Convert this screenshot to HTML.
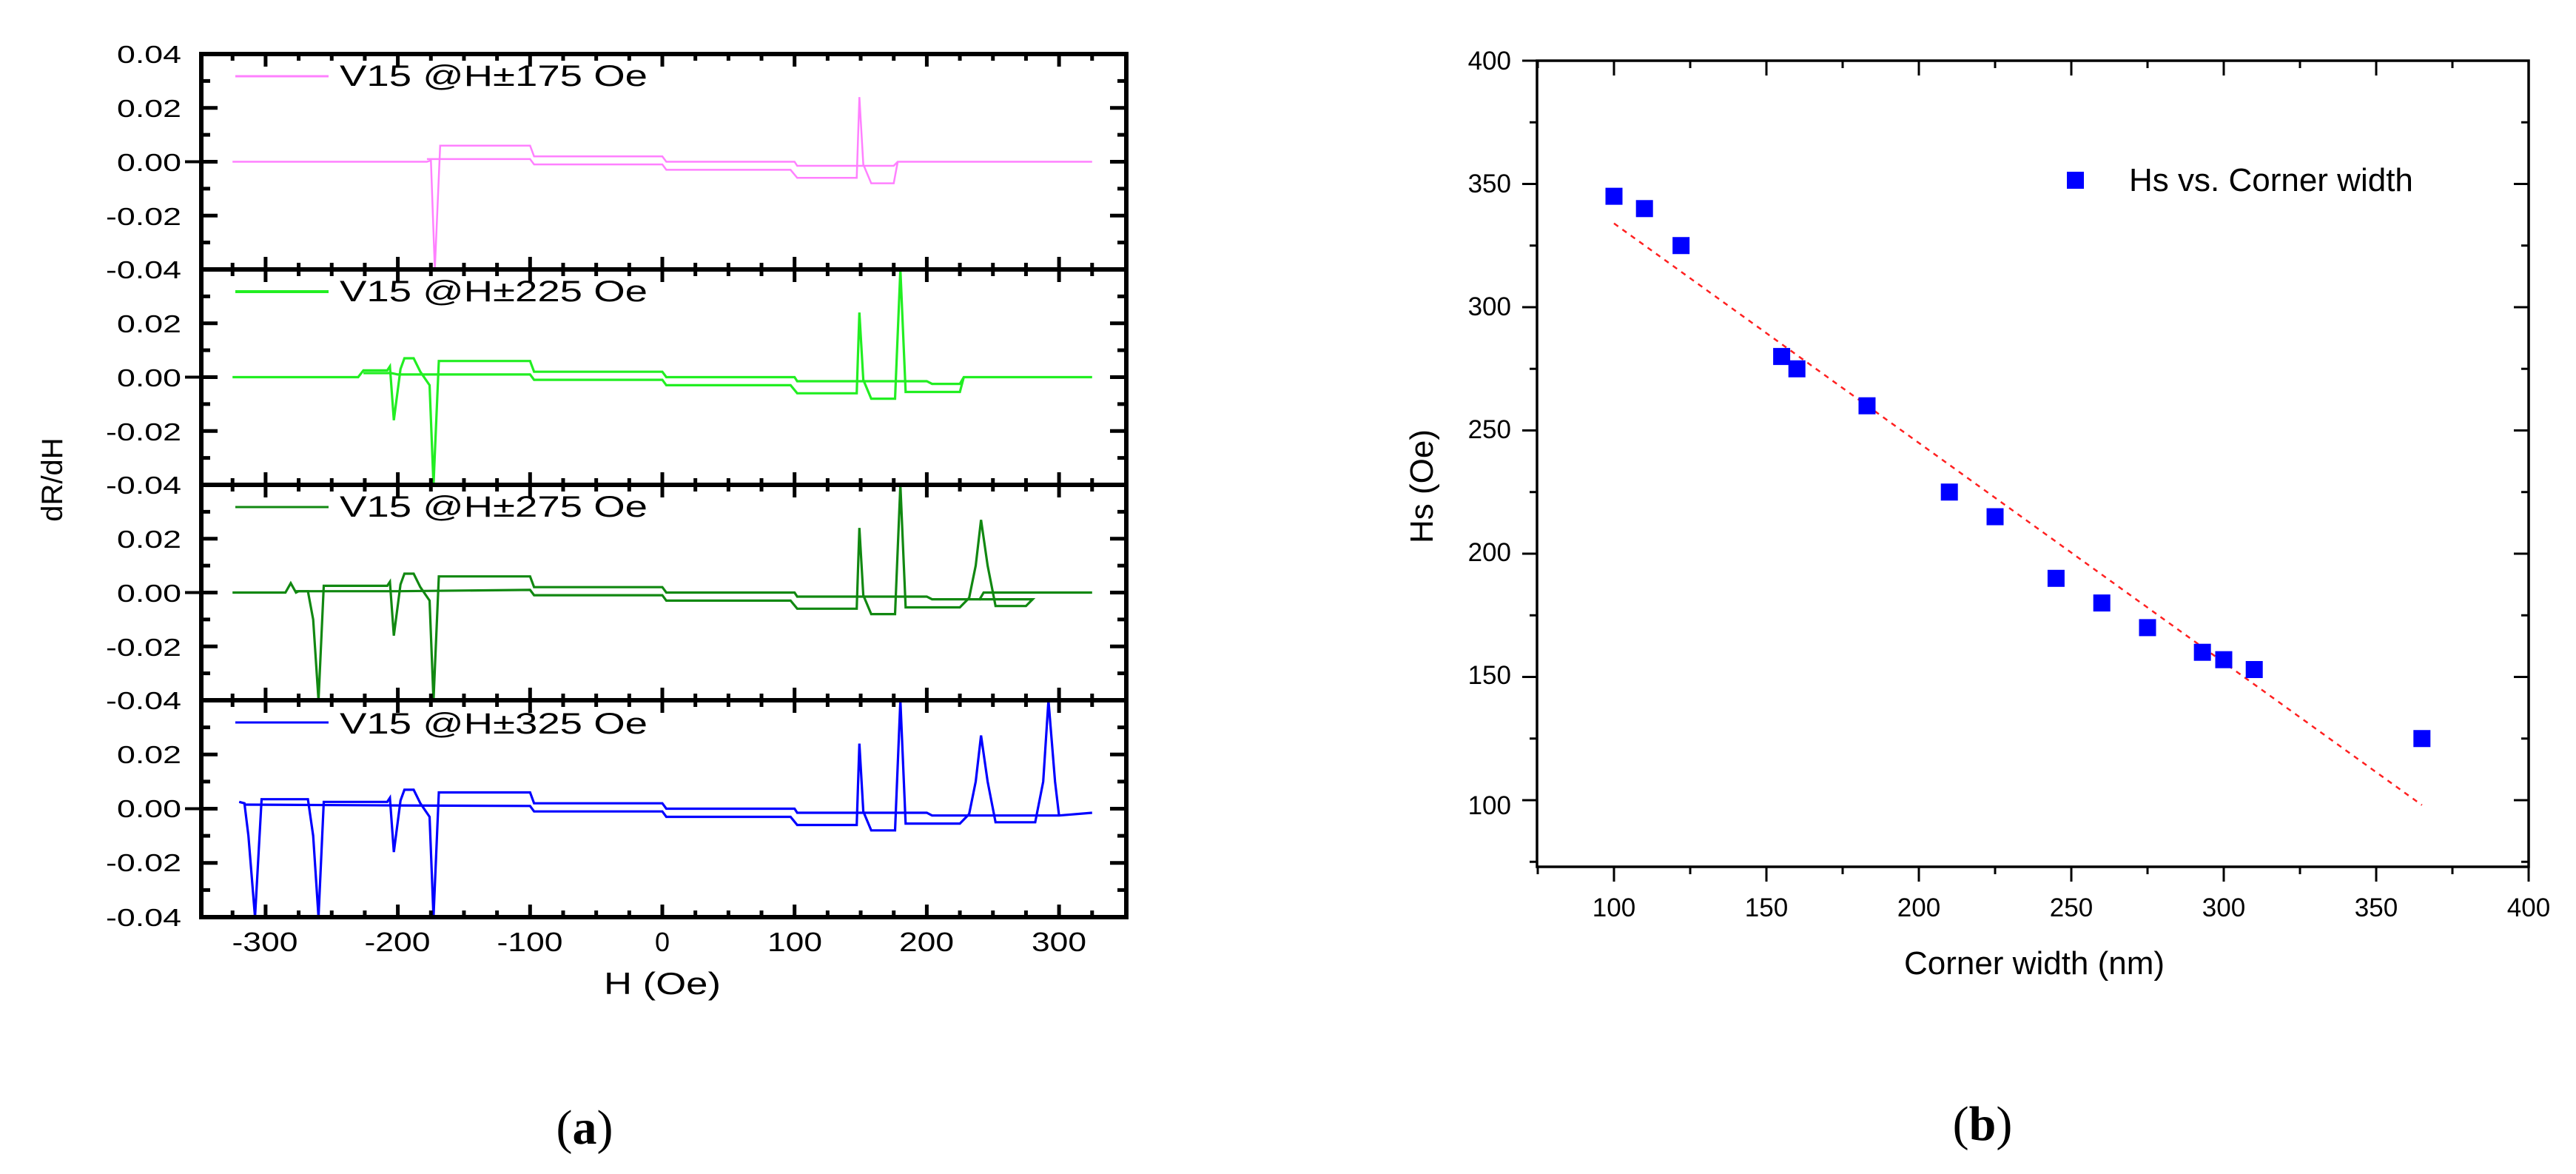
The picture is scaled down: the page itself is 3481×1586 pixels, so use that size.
<!DOCTYPE html>
<html><head><meta charset="utf-8"><style>
html,body{margin:0;padding:0;background:#fff;}
svg{display:block;}
text{font-family:"Liberation Sans",Arial,sans-serif;fill:#000;}
text.serif{font-family:"Liberation Serif",serif;}
</style></head><body>
<svg id="s" width="3481" height="1586" viewBox="0 0 3481 1586" xmlns="http://www.w3.org/2000/svg">
<g id="a"></g>
<g id="b"></g>
<g font-size="33">
<text x="245" y="85" text-anchor="end" textLength="87" lengthAdjust="spacingAndGlyphs">0.04</text>
<text x="245" y="158" text-anchor="end" textLength="87" lengthAdjust="spacingAndGlyphs">0.02</text>
<text x="245" y="231" text-anchor="end" textLength="87" lengthAdjust="spacingAndGlyphs">0.00</text>
<text x="245" y="304" text-anchor="end" textLength="102" lengthAdjust="spacingAndGlyphs">-0.02</text>
<text x="245" y="376" text-anchor="end" textLength="102" lengthAdjust="spacingAndGlyphs">-0.04</text>
<text x="245" y="449" text-anchor="end" textLength="87" lengthAdjust="spacingAndGlyphs">0.02</text>
<text x="245" y="522" text-anchor="end" textLength="87" lengthAdjust="spacingAndGlyphs">0.00</text>
<text x="245" y="595" text-anchor="end" textLength="102" lengthAdjust="spacingAndGlyphs">-0.02</text>
<text x="245" y="667" text-anchor="end" textLength="102" lengthAdjust="spacingAndGlyphs">-0.04</text>
<text x="245" y="740" text-anchor="end" textLength="87" lengthAdjust="spacingAndGlyphs">0.02</text>
<text x="245" y="813" text-anchor="end" textLength="87" lengthAdjust="spacingAndGlyphs">0.00</text>
<text x="245" y="886" text-anchor="end" textLength="102" lengthAdjust="spacingAndGlyphs">-0.02</text>
<text x="245" y="958" text-anchor="end" textLength="102" lengthAdjust="spacingAndGlyphs">-0.04</text>
<text x="245" y="1031" text-anchor="end" textLength="87" lengthAdjust="spacingAndGlyphs">0.02</text>
<text x="245" y="1104" text-anchor="end" textLength="87" lengthAdjust="spacingAndGlyphs">0.00</text>
<text x="245" y="1177" text-anchor="end" textLength="102" lengthAdjust="spacingAndGlyphs">-0.02</text>
<text x="245" y="1251" text-anchor="end" textLength="102" lengthAdjust="spacingAndGlyphs">-0.04</text>
</g>
<g font-size="36" text-anchor="middle">
<text x="358" y="1285" textLength="89" lengthAdjust="spacingAndGlyphs">-300</text>
<text x="537" y="1285" textLength="89" lengthAdjust="spacingAndGlyphs">-200</text>
<text x="716" y="1285" textLength="89" lengthAdjust="spacingAndGlyphs">-100</text>
<text x="895" y="1285">0</text>
<text x="1074" y="1285" textLength="74" lengthAdjust="spacingAndGlyphs">100</text>
<text x="1252" y="1285" textLength="74" lengthAdjust="spacingAndGlyphs">200</text>
<text x="1431" y="1285" textLength="74" lengthAdjust="spacingAndGlyphs">300</text>
</g>
<text x="895" y="1343" font-size="42" text-anchor="middle" textLength="158" lengthAdjust="spacingAndGlyphs">H (Oe)</text>
<text transform="translate(84,648) rotate(-90)" font-size="40" text-anchor="middle">dR/dH</text>
<g font-size="40">
<text x="459" y="116" textLength="416" lengthAdjust="spacingAndGlyphs">V15 @H±175 Oe</text>
<text x="459" y="407" textLength="416" lengthAdjust="spacingAndGlyphs">V15 @H±225 Oe</text>
<text x="459" y="698" textLength="416" lengthAdjust="spacingAndGlyphs">V15 @H±275 Oe</text>
<text x="459" y="991" textLength="416" lengthAdjust="spacingAndGlyphs">V15 @H±325 Oe</text>
</g>
<text class="serif" x="790" y="1545" font-size="66" text-anchor="middle">(<tspan font-weight="bold">a</tspan>)</text>
<g font-size="35" text-anchor="end">
<text x="2042" y="94">400</text>
<text x="2042" y="260">350</text>
<text x="2042" y="426">300</text>
<text x="2042" y="592">250</text>
<text x="2042" y="758">200</text>
<text x="2042" y="924">150</text>
<text x="2042" y="1100">100</text>
</g>
<g font-size="35" text-anchor="middle">
<text x="2181" y="1238">100</text>
<text x="2387" y="1238">150</text>
<text x="2593" y="1238">200</text>
<text x="2799" y="1238">250</text>
<text x="3005" y="1238">300</text>
<text x="3211" y="1238">350</text>
<text x="3417" y="1238">400</text>
</g>
<text x="2749" y="1316" font-size="44" text-anchor="middle">Corner width (nm)</text>
<text transform="translate(1936,657) rotate(-90)" font-size="44" text-anchor="middle">Hs (Oe)</text>
<rect x="2793" y="232" width="23" height="23" fill="#0000ff"/>
<text x="2877" y="258" font-size="44">Hs vs. Corner width</text>
<text class="serif" x="2679" y="1540" font-size="66" text-anchor="middle">(<tspan font-weight="bold">b</tspan>)</text>
</svg>
<script>
var NS="http://www.w3.org/2000/svg";
function el(p,t,a){var e=document.createElementNS(NS,t);for(var k in a)e.setAttribute(k,a[k]);p.appendChild(e);return e;}
var A=document.getElementById('a');
var L=272,R=1522,tops=[73,364,655,946],bots=[364,655,946,1239];
function X(h){return 895+h*1.787;}
var cols=['#ff80ff','#22ee22','#118811','#0000ff'];
var base=[
 [[-325,0],[-178,0],[-175,0.5],[-172,-40],[-168,6],[-100,6],[-97,2],[0,2],[3,0],[100,0],[102,-1.5],[175,-1.5],[178,0],[325,0]],
 [[-178,1],[-100,1],[-97,-1],[0,-1],[3,-3],[97,-3],[102,-6],[147,-6],[149,24],[152,-1],[158,-8],[175,-8],[178,0]]
];
var curves=[
 base,
 [[[-325,0],[-230,0],[-226,2.5],[-208,2.5],[-206,4],[-203,-16],[-198,3],[-195,7],[-188,7],[-183,2],[-176,-3],[-173,-40],[-169,6],[-100,6],[-97,2],[0,2],[3,0],[100,0],[102,-1.5],[200,-1.5],[204,-2.5],[225,-2.5],[228,0],[325,0]],
  [[-226,1.5],[-205,1.5],[-200,1],[-100,1],[-97,-1],[0,-1],[3,-3],[97,-3],[102,-6],[147,-6],[149,24],[152,-1],[158,-8],[176,-8],[180,40],[184,-5.5],[225,-5.5],[228,0]]],
 [[[-325,0],[-285,0],[-281,3.5],[-277,0],[-275,0.5],[-268,0.5],[-264,-10],[-260,-40],[-256,2.5],[-208,2.5],[-206,4],[-203,-16],[-198,3],[-195,7],[-188,7],[-183,2],[-176,-3],[-173,-40],[-169,6],[-100,6],[-97,2],[0,2],[3,0],[100,0],[102,-1.5],[200,-1.5],[204,-2.5],[240,-2.5],[243,0],[325,0]],
  [[-277,0.5],[-200,0.5],[-100,1],[-97,-1],[0,-1],[3,-3],[97,-3],[102,-6],[147,-6],[149,24],[152,-1],[158,-8],[176,-8],[180,40],[184,-5.5],[225,-5.5],[232,-2],[237,10],[241,27],[246,10],[252,-5],[275,-5],[280,-2.5],[240,-2.5]]],
 [[[-320,2.5],[-316,2],[-313,-10],[-308,-40],[-303,3.5],[-268,3.5],[-264,-10],[-260,-40],[-256,2.5],[-208,2.5],[-206,4],[-203,-16],[-198,3],[-195,7],[-188,7],[-183,2],[-176,-3],[-173,-40],[-169,6],[-100,6],[-97,2],[0,2],[3,0],[100,0],[102,-1.5],[200,-1.5],[204,-2.5],[240,-2.5],[300,-2.5],[325,-1.5]],
  [[-316,1.5],[-200,1.2],[-100,1],[-97,-1],[0,-1],[3,-3],[97,-3],[102,-6],[147,-6],[149,24],[152,-1],[158,-8],[176,-8],[180,40],[184,-5.5],[225,-5.5],[232,-2],[237,10],[241,27],[246,10],[252,-5],[282,-5],[288,10],[292,40],[297,10],[300,-2.5]]]
];
for(var p=0;p<4;p++){
 var t=tops[p],b=bots[p],m=(t+b)/2,s=(b-t)/80;
 for(var c=0;c<2;c++){
  var pts=curves[p][c].map(function(q){return X(q[0]).toFixed(1)+','+(m-q[1]*s).toFixed(1);}).join(' ');
  el(A,'polyline',{points:pts,fill:'none',stroke:cols[p],'stroke-width':p==0?2.5:3.2});
 }
 el(A,'line',{x1:318,x2:444,y1:t+30,y2:t+30,stroke:cols[p],'stroke-width':p==1?4:3});
 for(var h=-325;h<=325;h+=25){var maj=(h%100==0);var len=maj?17:9;var x=X(h);
  el(A,'line',{x1:x,x2:x,y1:b,y2:b-len,stroke:'#000','stroke-width':5});
  el(A,'line',{x1:x,x2:x,y1:t,y2:t+len,stroke:'#000','stroke-width':5});}
 for(var v=-3;v<=3;v++){var y=m-v*10*s;var len2=(v%2==0)?22:12;
  el(A,'line',{x1:L,x2:L+len2,y1:y,y2:y,stroke:'#000','stroke-width':5});
  el(A,'line',{x1:R,x2:R-len2,y1:y,y2:y,stroke:'#000','stroke-width':5});}
 el(A,'line',{x1:L-22,x2:L,y1:m,y2:m,stroke:'#000','stroke-width':4});
}
el(A,'rect',{x:L,y:73,width:R-L,height:1239-73,fill:'none',stroke:'#000','stroke-width':6});
for(var i=1;i<4;i++)el(A,'line',{x1:L,x2:R,y1:tops[i],y2:tops[i],stroke:'#000','stroke-width':6});
var B=document.getElementById('b');
var bl=2077,br=3417,bt=82,bb=1171;
function BX(v){return 2181+(v-100)*4.12;}
function BY(v){return 82+(400-v)*3.33;}
el(B,'rect',{x:bl,y:bt,width:br-bl,height:bb-bt,fill:'none',stroke:'#000','stroke-width':3.5});
for(var v=75;v<=400;v+=25){var maj=(v%50==0),len=maj?20:10,x=BX(v),y=BY(v);
 el(B,'line',{x1:x,x2:x,y1:bb,y2:bb+len,stroke:'#000','stroke-width':3});
 el(B,'line',{x1:x,x2:x,y1:bt,y2:bt+len,stroke:'#000','stroke-width':3});
 el(B,'line',{x1:bl,x2:bl-len,y1:y,y2:y,stroke:'#000','stroke-width':3});
 el(B,'line',{x1:br,x2:br-len,y1:y,y2:y,stroke:'#000','stroke-width':3});}
el(B,'line',{x1:BX(100),y1:BY(334),x2:BX(365),y2:BY(98),stroke:'#ff2020','stroke-width':2.5,'stroke-dasharray':'7,7'});
[[100,345],[110,340],[122,325],[155,280],[160,275],[183,260],[210,225],[225,215],[245,190],[260,180],[275,170],[293,160],[300,157],[310,153],[365,125]].forEach(function(q){
 el(B,'rect',{x:BX(q[0])-11.5,y:BY(q[1])-11.5,width:23,height:23,fill:'#0000ff'});});
</script>
</body></html>
